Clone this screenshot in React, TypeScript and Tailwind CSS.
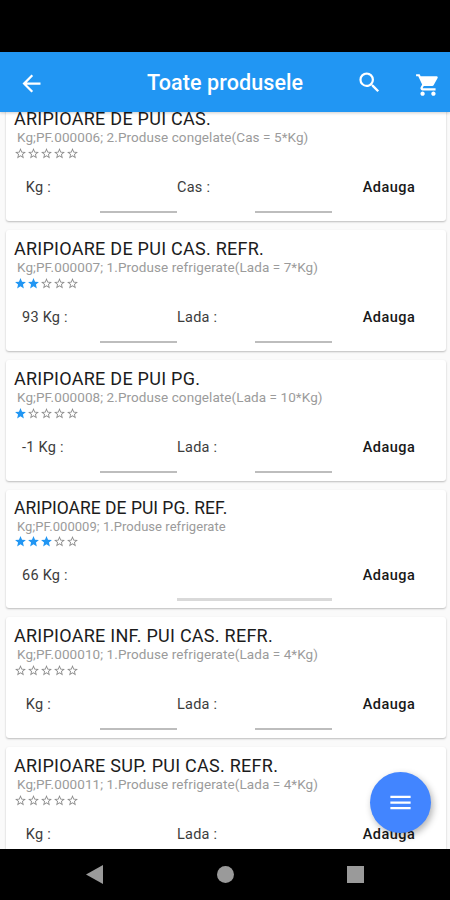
import { MdArrowBack, MdMenu, MdSearch, MdShoppingCart, MdStar, MdStarBorder } from "react-icons/md";
import clsx from "clsx";

type Product = {
	name: string;
	details: string;
	stars: number;
	qty?: string;
	pack?: string;
};

const products: Product[] = [
	{ name: "ARIPIOARE DE PUI CAS.", details: "Kg;PF.000006; 2.Produse congelate(Cas = 5*Kg)", stars: 0, pack: "Cas" },
	{
		name: "ARIPIOARE DE PUI CAS. REFR.",
		details: "Kg;PF.000007; 1.Produse refrigerate(Lada = 7*Kg)",
		stars: 2,
		qty: "93",
		pack: "Lada",
	},
	{
		name: "ARIPIOARE DE PUI PG.",
		details: "Kg;PF.000008; 2.Produse congelate(Lada = 10*Kg)",
		stars: 1,
		qty: "-1",
		pack: "Lada",
	},
	{ name: "ARIPIOARE DE PUI PG. REF.", details: "Kg;PF.000009; 1.Produse refrigerate", stars: 3, qty: "66" },
	{
		name: "ARIPIOARE INF. PUI CAS. REFR.",
		details: "Kg;PF.000010; 1.Produse refrigerate(Lada = 4*Kg)",
		stars: 0,
		pack: "Lada",
	},
	{
		name: "ARIPIOARE SUP. PUI CAS. REFR.",
		details: "Kg;PF.000011; 1.Produse refrigerate(Lada = 4*Kg)",
		stars: 0,
		pack: "Lada",
	},
];

function Stars({ count }: { count: number }) {
	return (
		<div className="flex h-[13px] items-center pl-2">
			{[0, 1, 2, 3, 4].map((i) =>
				i < count ? (
					<MdStar key={i} className="size-[13px] shrink-0 text-[#2196f3]" />
				) : (
					<MdStarBorder key={i} className="size-[13px] shrink-0 text-[#8c8c8c]" />
				),
			)}
		</div>
	);
}

function ProductCard({ product }: { product: Product }) {
	const { name, details, stars, qty, pack } = product;
	return (
		<article
			className={clsx(
				"shrink-0 rounded-[3px] bg-white shadow-[0_1px_2px_rgba(0,0,0,0.25)]",
				pack ? "h-[121px] pt-2" : "h-[118px] pt-[7px]",
			)}
		>
			<h2
				className={clsx(
					"h-[22px] pl-2 leading-[22px] whitespace-nowrap text-[#1c1c1c]",
					pack ? "text-[18px] tracking-[0.26px]" : "text-[17.5px]",
				)}
			>
				{name}
			</h2>
			<p
				className={clsx(
					"pl-[11px] whitespace-nowrap text-[#9b9b9b]",
					pack ? "h-[17px] text-[13.5px] leading-[14px] tracking-[0.08px]" : "h-4 text-[13px] leading-4 tracking-[0.05px]",
				)}
			>
				{details}
			</p>
			<Stars count={stars} />
			<div
				className={clsx(
					"grid grid-cols-[78px_77px_78px_77px_114px] pl-4 text-[14.5px] leading-[56px] tracking-[0.25px] whitespace-pre text-[#3c3c3c]",
					pack ? "h-[53px]" : "h-[54px]",
				)}
			>
				<span>{`${qty ?? ""} Kg :`}</span>
				{pack ? (
					<>
						<span className="h-[53px] border-b-2 border-[#bdbdbd]" />
						<span>{`${pack} :`}</span>
						<span className="h-[53px] border-b-2 border-[#bdbdbd]" />
					</>
				) : (
					<span className="col-span-2 col-start-3 h-[53px] border-b-3 border-[#d9d9d9]" />
				)}
				<button className="h-14 text-center leading-[56px] font-medium tracking-[0.45px] text-[#181818]">
					Adauga
				</button>
			</div>
		</article>
	);
}

export default function App() {
	return (
		<div className="relative flex h-[900px] w-[450px] flex-col overflow-hidden bg-black font-[Roboto,sans-serif]">
			<header className="z-10 mt-[52px] flex h-[60px] shrink-0 items-center bg-[#2196f3] pt-0.5 text-white shadow-[0_1px_3px_rgba(0,0,0,0.2)]">
				<MdArrowBack className="ml-[18px] size-[27px]" />
				<h1 className="ml-[102px] w-[160px] pt-px text-[21.5px] font-medium tracking-[0.1px] whitespace-nowrap">
					Toate produsele
				</h1>
				<MdSearch className="-mt-0.5 ml-[49px] size-[27px]" />
				<MdShoppingCart className="mt-[3px] ml-8 size-[26px]" />
			</header>
			<main className="flex h-[737px] shrink-0 flex-col overflow-hidden bg-[#fafafa] pr-1 pl-1.5">
				<div className="-mt-3 flex flex-col gap-[9px]">
					{products.map((product) => (
						<ProductCard key={product.name} product={product} />
					))}
				</div>
			</main>
			<button className="absolute top-[772px] left-[370px] flex size-[61px] items-center justify-center rounded-full bg-[#4285ff] text-white shadow-[2px_3px_7px_rgba(0,0,0,0.3)]">
				<MdMenu className="size-[27px]" />
			</button>
			<nav className="flex h-[51px] shrink-0 items-center bg-black">
				<svg className="ml-[86px] h-[19px] w-[17px] fill-[#9a9a9a]" viewBox="0 0 17 19">
					<path d="M17 0v19L0 9.5z" />
				</svg>
				<span className="ml-[114px] size-[17px] rounded-full bg-[#9a9a9a]" />
				<span className="ml-[113px] size-[17px] bg-[#9a9a9a]" />
			</nav>
		</div>
	);
}
